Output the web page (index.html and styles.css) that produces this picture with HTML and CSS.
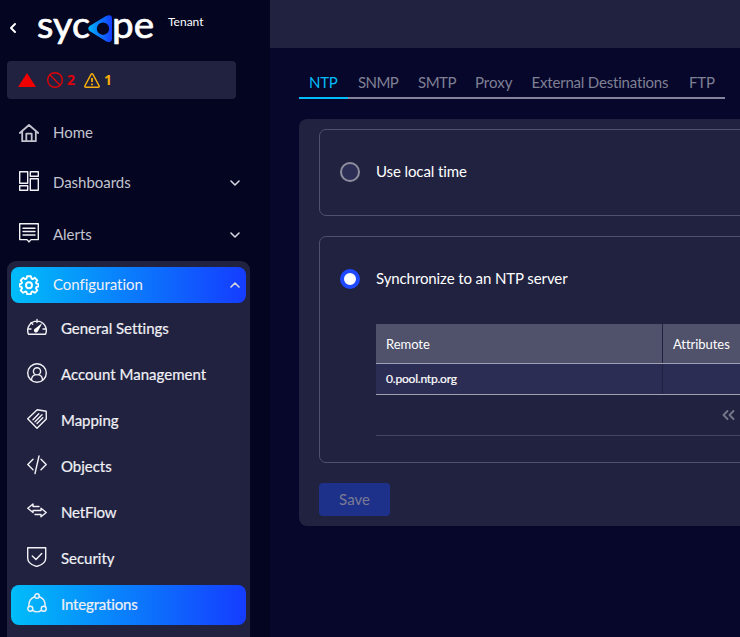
FILE: index.html
```html
<!DOCTYPE html>
<html lang="en">
<head>
<meta charset="utf-8">
<title>Sycope</title>
<link rel="stylesheet" href="styles.css">
</head>
<body>
<aside class="sidebar">
  <header class="brand">
    <svg class="back" width="8" height="12" viewBox="0 0 8 12"><path d="M6 2 2 6l4 4"/></svg>
    <svg class="logo" width="120" height="36" viewBox="0 0 120 36" role="img" aria-label="sycope">
      <defs><linearGradient id="mark"><stop offset="0" stop-color="#00b4fb"/><stop offset="1" stop-color="#153cff"/></linearGradient></defs>
      <text x="0" y="28" textLength="53" lengthAdjust="spacingAndGlyphs">syc</text>
      <text x="75" y="28" textLength="42" lengthAdjust="spacingAndGlyphs">pe</text>
      <path class="mark" fill-rule="evenodd" d="M52.500 16Q50 18.500 52.500 21L69 31.200Q75 34 75 28V8.500Q75 3.500 69 6ZM66 12.500a6.200 6.200 0 1 1 0 12.400a6.200 6.200 0 0 1 0-12.400Z"/>
    </svg>
    <span class="tenant">Tenant</span>
  </header>

  <div class="status">
    <svg width="18" height="14" viewBox="0 0 18 14"><path d="M9 0 18 14H0Z" fill="#f00000"/></svg>
    <svg class="ban" width="16" height="16" viewBox="0 0 16 16"><circle cx="8" cy="8" r="7.3"/><path d="m3 3 10 10"/></svg>
    <b class="count red">2</b>
    <svg class="warn" width="16" height="15" viewBox="0 0 16 15"><path d="M7.2 1.2.9 12.8q-.5 1.4 1 1.5h12.2q1.5-.1 1-1.5L8.8 1.2q-.8-1-1.6 0Z"/><path class="mark-bold" d="M8 5v4M8 10.5v1.7"/></svg>
    <b class="count amber">1</b>
  </div>

  <nav>
    <a class="item home"><svg class="icon soft" width="20" height="20" viewBox="0 0 20 20"><path d="M.8 10 10 2l9.200 8M3.200 8.500V18.200H16.800V8.500M7.300 18V10.700h5.400V18"/></svg><span>Home</span></a>
    <a class="item dash"><svg class="icon raised" width="20" height="20" viewBox="0 0 20 20"><path d="M.7.7h8v11.600h-8zM11.300.7h8v4.600h-8zM.7 14.700h8v4.600h-8zM11.300 7.700h8v11.600h-8z"/></svg><span>Dashboards</span><svg class="chev" width="10" height="8" viewBox="0 0 10 8"><path d="m1 2 4 4 4-4"/></svg></a>
    <a class="item alerts"><svg class="icon raised" width="20" height="20" viewBox="0 0 20 20"><path d="M.7.7h18.600v15.900h-7.300l-2 2.300-2-2.300H.7zM4 5.200h12M4 8.500h12M4 12h12"/></svg><span>Alerts</span><svg class="chev" width="10" height="8" viewBox="0 0 10 8"><path d="m1 2 4 4 4-4"/></svg></a>

    <section class="group">
      <a class="item config active"><svg class="icon gear" width="20" height="20" viewBox="0 0 20 20"><path d="M8.100 1.200h3.800l.6 2.400 1.200.5 2.200-1.300 2.400 2.500-1.300 2.100.5 1.200 2.100.6v2.200l-2.100.6-.5 1.200 1.300 2.200-2.400 2.400-2.200-1.300-1.200.5-.6 2.200H8.100l-.6-2.200-1.200-.5-2.200 1.300-2.400-2.400L3 13.200 2.500 12l-2.100-.6V9.200L2.500 8.600 3 7.400 1.700 5.300l2.400-2.500 2.200 1.300 1.200-.5Z"/><circle cx="10" cy="10.200" r="3"/></svg><span>Configuration</span><svg class="chev" width="10" height="8" viewBox="0 0 10 8"><path d="m1 6 4-4 4 4"/></svg></a>
      <a class="item sub general"><svg class="icon" width="20" height="20" viewBox="0 0 20 20"><path d="M1.500 17.200a9.300 9.300 0 1 1 17 0ZM10 2.500v3M4 5.500l1.700 1.700M1 12h3M16 12h3"/><path class="solid" d="m15.300 6-7 5.500a2.100 2.100 0 1 0 2.700 2.700Z"/></svg><span>General Settings</span></a>
      <a class="item sub account"><svg class="icon" width="20" height="20" viewBox="0 0 20 20"><circle cx="10" cy="10" r="9.300"/><circle cx="10" cy="8.300" r="3.600"/><path d="M4.500 17c.1-3.100 1.600-4.500 3.500-5.100M15.500 17c-.1-3.100-1.600-4.500-3.500-5.100"/></svg><span>Account Management</span></a>
      <a class="item sub mapping"><svg class="icon" width="20" height="20" viewBox="0 0 20 20"><path d="M.7 9.700 10.200.7l9 1.500.1 7.700-9.300 9.300ZM6 10.700l5.800-5.900M8 12.700l7-7M10 14.600l5.800-5.800"/></svg><span>Mapping</span></a>
      <a class="item sub objects"><svg class="icon" width="20" height="20" viewBox="0 0 20 20"><path d="M6 4.200.8 9.500 6 14.800M14 4.200l5.200 5.300-5.200 5.300M12 1 8 18.500"/></svg><span>Objects</span></a>
      <a class="item sub netflow"><svg class="icon" width="20" height="20" viewBox="0 0 20 20"><path d="M12 5.500H6V3L.8 7.300 6 11.500V9.500h6M8 9.500h6V7.200l5.200 4.300L14 15.800v-2.300H8"/></svg><span>NetFlow</span></a>
      <a class="item sub security"><svg class="icon" width="20" height="20" viewBox="0 0 20 20"><path d="M.7.7h18v10.500q0 5.500-9 8.300-9-2.800-9-8.300ZM5.300 9l3.700 3.500 5.700-6"/></svg><span>Security</span></a>
      <a class="item sub integrations active"><svg class="icon" width="20" height="20" viewBox="0 0 20 20"><circle cx="10" cy="3" r="2.300"/><circle cx="3.300" cy="15.800" r="2.500"/><circle cx="16.700" cy="15.800" r="2.500"/><path d="M7.700 3.600Q1 6.600 2 13.500M12.300 3.600Q19 6.600 18 13.500M5.500 17.400q4.500 3 9 0"/></svg><span>Integrations</span></a>
    </section>
  </nav>
</aside>

<main>
  <div class="topbar"></div>
  <div class="tabs">
    <a class="tab ntp selected">NTP</a><a class="tab snmp">SNMP</a><a class="tab smtp">SMTP</a><a class="tab proxy">Proxy</a><a class="tab ext">External Destinations</a><a class="tab ftp">FTP</a>
  </div>
  <section class="panel">
    <div class="option local">
      <label class="choice"><i class="radio"></i><span class="l-local">Use local time</span></label>
    </div>
    <div class="option server">
      <label class="choice"><i class="radio on"></i><span class="l-sync">Synchronize to an NTP server</span></label>
      <div class="grid">
        <div class="row head"><div class="cell"><span class="remote">Remote</span></div><div class="cell"><span class="attr">Attributes</span></div></div>
        <div class="row data"><div class="cell"><span class="host">0.pool.ntp.org</span></div><div class="cell"></div></div>
        <div class="pager"><svg width="13" height="10" viewBox="0 0 13 10"><path d="M5.500 1 1.500 5l4 4M11.500 1l-4 4 4 4"/></svg></div>
      </div>
    </div>
    <button class="save" disabled><span>Save</span></button>
  </section>
</main>
</body>
</html>
```

FILE: styles.css
```css
* { box-sizing: border-box; }
body {
  margin: 0;
  width: 740px;
  height: 637px;
  overflow: hidden;
  display: flex;
  background: #07072b;
  color: #fff;
  font: 15px/20px Lato, "Liberation Sans", sans-serif;
}
svg { fill: none; stroke-linecap: round; stroke-linejoin: round; flex: none; }
span { white-space: nowrap; }

.sidebar { width: 270px; height: 637px; flex: none; overflow: hidden; background: #040521; }
.brand { display: flex; height: 61px; padding-left: 9px; }
.back { margin-top: 22px; stroke: #fff; stroke-width: 2; }
.logo { margin: 10px 0 0 20px; overflow: visible; }
.logo text { font-size: 36px; fill: #fff; stroke: #fff; stroke-width: .7; }
.logo .mark { fill: url(#mark); }
.tenant { margin: 12px 0 0 11px; font-size: 12px; }

.status {
  display: flex;
  align-items: center;
  width: 229px;
  height: 38px;
  margin-left: 7px;
  padding-left: 11px;
  border-radius: 4px;
  background: #212240;
}
.ban { margin-left: 11px; stroke: #e00008; stroke-width: 1.4; }
.warn { margin-left: 9px; stroke: #f5ae0a; stroke-width: 1.4; }
.warn .mark-bold { stroke-width: 1.8; stroke-linecap: butt; }
.count { margin: 0 0 1px 4px; font: 700 14px/20px "Noto Sans", sans-serif; }
.red { color: #e00008; }
.amber { color: #f5ae0a; }

nav { margin-top: 9px; }
.item { display: flex; align-items: center; height: 50px; padding-left: 19px; color: #c3c4cf; }
.item span { margin: 0 0 2px 14px; letter-spacing: -.03px; }
.item.alerts { margin-top: 2px; }
.icon { stroke: #f2f2f6; stroke-width: 1.4; }
.icon.soft { stroke: #c3c4cf; stroke-width: 1.8; }
.icon.gear { stroke: #fff; stroke-width: 1.9; }
.icon .solid { fill: #fff; stroke: none; }
.raised, .sub .icon { margin-bottom: 4px; }
.chev { margin-left: auto; margin-right: 30px; stroke: #d4d5df; stroke-width: 1.6; }

.group { width: 243px; height: 390px; margin: 1px 0 0 7px; padding: 6px 4px; border-radius: 9px; background: #212240; }
.group .item { color: #f0f0f5; border-radius: 8px; }
.group .config { height: 36px; padding-left: 8px; }
.group .chev { margin-right: 6px; }
.group .sub { height: 40px; margin-top: 6px; padding-left: 16px; -webkit-text-stroke: .2px; }
.group .account span { letter-spacing: .02px; }
.group .netflow span, .group .integrations span { letter-spacing: -.15px; }
.group .active { background: linear-gradient(90deg, #00bdf9, #153cff); }

main { width: 470px; overflow: hidden; }
.topbar { height: 48px; background: #212240; }
.tabs { display: flex; width: 426px; height: 51px; margin-left: 29px; border-bottom: 2px solid #85849b; }
.tab { height: 51px; padding: 24px 0 0 10px; white-space: nowrap; color: #7f8094; overflow: hidden; }
.tab.ntp { width: 49px; letter-spacing: -.3px; }
.tab.snmp { width: 60px; letter-spacing: -.6px; }
.tab.smtp { width: 57px; letter-spacing: -.5px; }
.tab.proxy { width: 57px; }
.tab.ext { width: 157px; letter-spacing: -.19px; padding-left: 9.500px; }
.tab.ftp { letter-spacing: -.2px; }
.tab.selected { color: #00bdf9; border-bottom: 2px solid #00bdf9; }

.panel { width: 600px; height: 407px; margin: 20px 0 0 29px; padding: 10px 20px; border-radius: 8px; background: #212240; }
.option { border: 1px solid #50506d; border-radius: 7px; padding-left: 20px; }
.local { height: 87px; padding-top: 32px; }
.server { height: 227px; margin-top: 20px; padding-top: 32px; }
.choice { display: flex; align-items: center; height: 20px; }
.choice span { margin: 0 0 2px 16px; letter-spacing: -.1px; }
.radio { width: 20px; height: 20px; border: 2px solid #8e8e9f; border-radius: 50%; background: #2d2e55; }
.radio.on { border: 4px solid #1e49ff; background: #fff; }

.grid { margin: 35px 0 0 36px; border-bottom: 1px solid #464663; font-size: 13px; }
.row { display: grid; grid-template-columns: 287px 1fr; border-bottom: 1px solid #a0a0b5; }
.cell { display: flex; align-items: center; padding-left: 10px; }
.cell:first-child { border-right: 1px solid #212240; }
.head { height: 40px; background: #50516b; }
.remote, .attr { letter-spacing: -.05px; }
.data { height: 31px; background: #2c2d55; font-size: 12px; }
.host { letter-spacing: -.2px; -webkit-text-stroke: .2px; }
.pager { height: 40px; padding: 15px 0 0 346px; line-height: 0; stroke: #77778c; stroke-width: 1.8; }

.save { display: flex; align-items: center; justify-content: center; width: 71px; height: 33px; margin-top: 20px; padding: 0 0 1px; border: 0; border-radius: 4px; background: #1e318a; color: #7a7b94; font: 15px/20px Lato, sans-serif; }
```
